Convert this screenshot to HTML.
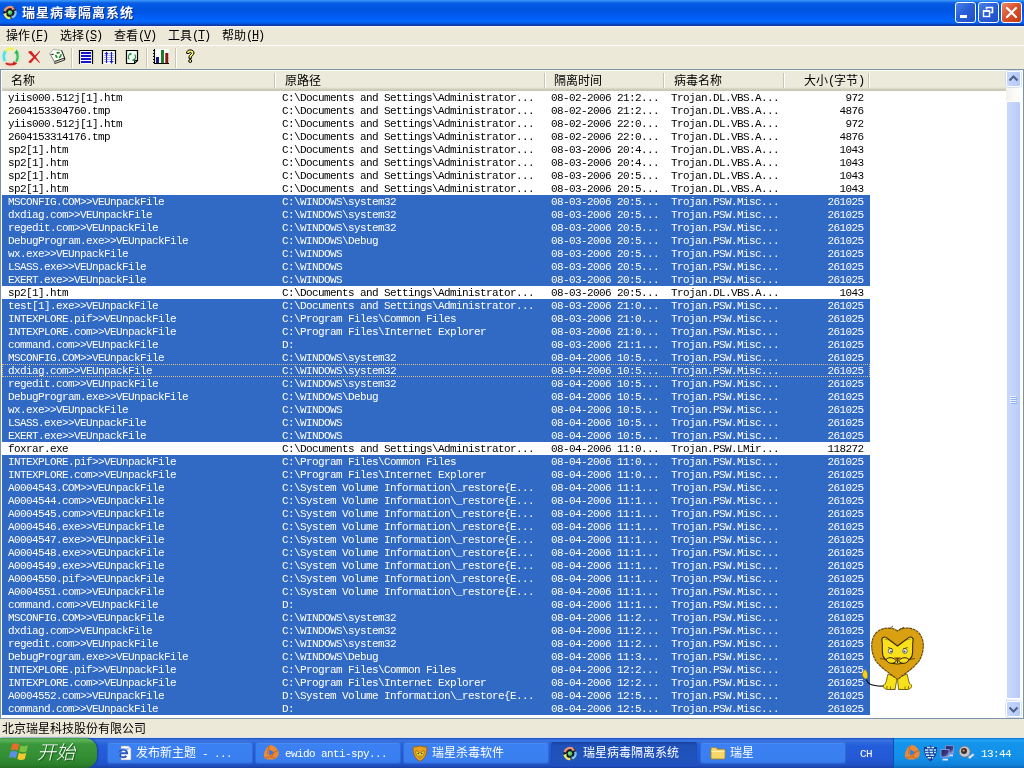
<!DOCTYPE html>
<html lang="zh-CN">
<head>
<meta charset="utf-8">
<title>瑞星病毒隔离系统</title>
<style>
*{box-sizing:border-box;margin:0;padding:0}
html,body{width:1024px;height:768px;overflow:hidden;background:#ece9d8}
body{position:relative;font-family:"Liberation Sans","Noto Sans CJK SC",sans-serif;font-size:12px;color:#000}
.abs{position:absolute}
#title .txt,#menu,#hdr,#rows,#status,#task{will-change:transform}
.m{font-family:"Liberation Mono","Noto Sans CJK SC",monospace;font-size:11px;letter-spacing:-.6px;white-space:pre}
.m2{font-family:"Liberation Mono","Noto Sans CJK SC",monospace;font-size:12px;letter-spacing:-1.2px;white-space:pre;position:relative;top:-1px}
/* title bar */
#title{left:0;top:0;width:1024px;height:26px;background:linear-gradient(to bottom,#3a96ff 0,#2f8cf8 1px,#1a70e8 2px,#0a5fe3 3px,#0058e2 5px,#0055e0 11px,#005af0 15px,#0064fa 19px,#0066fb 21px,#0060f0 23px,#0a4cc8 24px,#0a3aa8 25px,#0a3aa8 26px)}
#title .txt{left:22px;top:4px;height:18px;line-height:18px;color:#fff;font-weight:bold;font-size:13px;letter-spacing:1px;text-shadow:1px 1px 0 #0a2a80;white-space:nowrap}
.tb{top:2px;width:21px;height:21px;border:1px solid #fff;border-radius:3px;background:linear-gradient(135deg,#4b82e8 0,#2a5fd8 45%,#1f4fc8 100%)}
#bclose{background:linear-gradient(135deg,#e98a6a 0,#d9532c 45%,#c53a12 100%)}
/* menu */
#menuline{left:0;top:26px;width:1024px;height:1px;background:#f4f6fb}
#menu{left:0;top:27px;width:1024px;height:18px}
#menu span.mi{position:absolute;top:2px;height:14px;line-height:14px;white-space:nowrap}
#tline{left:0;top:45px;width:1024px;height:1px;background:#fff}
.sep{top:48px;width:2px;height:20px;border-left:1px solid #c9c6b8;border-right:1px solid #fff}
/* list */
#list{left:0;top:69px;width:1024px;height:650px;border:1px solid #7a93a6;background:#fff;overflow:hidden}
#hdr{left:0;top:0;width:1005px;height:21px;box-shadow:inset 1px 1px 0 #fff;background:linear-gradient(to bottom,#ebeadb 0,#ebeadb 17px,#e2dece 18px,#d6d2c2 19px,#cbc7b8 20px,#cbc7b8 21px)}
#hdr .h{position:absolute;top:4px;height:14px;line-height:14px;white-space:nowrap}
#hdr .d{position:absolute;top:3px;width:2px;height:15px;border-left:1px solid #c7c5b2;border-right:1px solid #fff}
#rows{left:1px;top:21px;width:868px}
.r{position:relative;height:13px;width:868px;line-height:13px}
.r.s{background:#316ac5;color:#fff}
.r.f{outline:1px dotted #d8c08a;outline-offset:-1px}
.r span{position:absolute;top:1px;height:13px;font-family:"Liberation Mono","Noto Sans CJK SC",monospace;font-size:11px;letter-spacing:-.6px;white-space:pre}
.c1{left:6px}.c2{left:280px}.c3{left:549px}.c4{left:669px}
.r span.c5{right:6.4px}
/* scrollbar */
#sb{left:1005px;top:0;width:17px;height:648px;background:linear-gradient(to right,#f3f1ec 0,#fbfbf8 50%,#fefefb 100%)}
.sbtn{left:0;width:15px;height:16px;border:1px solid #fff;border-radius:2px;background:linear-gradient(to right,#c8d8fb 0,#bccefa 60%,#b4c8f6 100%);box-shadow:0 0 0 .5px #b7c9f3}
#thumb{left:0;top:31px;width:15px;height:598px;border:1px solid #fff;border-radius:2px;background:linear-gradient(to right,#c9d8fc 0,#c2d3fc 50%,#b9cbf6 100%)}
/* status */
#status{left:2px;top:722px;height:14px;line-height:14px;white-space:nowrap}
/* taskbar */
#task{left:0;top:738px;width:1024px;height:30px;box-shadow:0 -1px 0 #dde4ee;background:linear-gradient(to bottom,#1f55c4 0,#2558cc 1px,#3a78e4 2px,#2e6ade 4px,#245ddb 8px,#2459d6 20px,#1f50c4 27px,#1941a5 30px)}
#start{left:0;top:0;width:97px;height:30px;border-radius:0 12px 12px 0;background:linear-gradient(to bottom,#3f9b3f 0,#5db25d 2px,#3a973a 6px,#348f34 18px,#2c822c 26px,#236f23 30px);box-shadow:1px 0 2px #153f8a}
#start .t{left:37px;top:3px;font-size:19px;line-height:24px;font-style:italic;font-weight:300;color:#fff;text-shadow:1px 1px 1px #1d4f1d;white-space:nowrap;letter-spacing:0}
.tk{top:4px;width:146px;height:22px;border-radius:3px;background:linear-gradient(to bottom,#5d96f0 0,#3c81f3 2px,#3a7ff0 18px,#3270de 23px);color:#fff;box-shadow:inset 0 0 0 1px rgba(30,70,170,.35)}
.tk.act{background:linear-gradient(to bottom,#183f98 0,#1e50b8 3px,#2053bc 20px,#2258c4 23px)}
.tk .l{position:absolute;left:29px;top:4px;height:14px;line-height:14px;white-space:nowrap}
.tk svg{position:absolute;left:10px;top:3px}
#tray{left:893px;top:0;width:131px;height:30px;background:linear-gradient(to bottom,#0f6fd0 0,#24a3f5 2px,#1594ec 5px,#1290e9 20px,#0f80d8 27px,#0c69bd 30px);border-left:1px solid #0c4fa8}
</style>
</head>
<body>
<!-- title bar -->
<div id="title" class="abs">
<svg class="abs" style="left:2px;top:4px" width="16" height="16" viewBox="0 0 16 16"><circle cx="8" cy="8.5" r="6.6" fill="#15181c"/><g fill="none" stroke-width="2.4"><path d="M2.6 7.2A5.4 5.4 0 0 1 11 3.9" stroke="#e8937c"/><path d="M13.2 6.6A5.4 5.4 0 0 1 10.6 13.4" stroke="#7fc4f4"/><path d="M8.4 14A5.4 5.4 0 0 1 2.6 9.6" stroke="#e9ea7a"/></g><path d="M10.2 2.4L13.4 5.2L9.8 6z" fill="#e8937c"/><path d="M12.6 12.4L9.6 15L9.4 11.6z" fill="#7fc4f4"/><path d="M1.2 10.4L4.6 8.4L4.4 11.8z" fill="#e9ea7a"/><circle cx="8" cy="8.6" r="2.3" fill="#4fc85f"/><circle cx="7.4" cy="8" r=".9" fill="#9fe8a8"/></svg>
<div class="abs txt">瑞星病毒隔离系统</div>
<div class="abs tb" style="left:955px"><div class="abs" style="left:4px;top:12px;width:7px;height:3px;background:#fff"></div></div>
<div class="abs tb" style="left:978px"><svg class="abs" style="left:0;top:0" width="19" height="19" viewBox="0 0 19 19"><path d="M7.5 6.5V4.5H13.5V9.5H11.5" fill="none" stroke="#fff" stroke-width="1.6"/><rect x="4.5" y="8" width="6" height="5.5" fill="none" stroke="#fff" stroke-width="1.4"/><rect x="4" y="7" width="7" height="2" fill="#fff"/></svg></div>
<div id="bclose" class="abs tb" style="left:1001px"><svg class="abs" style="left:0;top:0" width="19" height="19" viewBox="0 0 19 19"><path d="M5 5L14 14M14 5L5 14" stroke="#fff" stroke-width="2.2" stroke-linecap="round"/></svg></div>
</div>
<div id="menuline" class="abs"></div>
<!-- menu -->
<div id="menu" class="abs">
<span class="mi" style="left:6px">操作<span class="m2">(<u>F</u>)</span></span>
<span class="mi" style="left:60px">选择<span class="m2">(<u>S</u>)</span></span>
<span class="mi" style="left:114px">查看<span class="m2">(<u>V</u>)</span></span>
<span class="mi" style="left:168px">工具<span class="m2">(<u>T</u>)</span></span>
<span class="mi" style="left:222px">帮助<span class="m2">(<u>H</u>)</span></span>
</div>
<div id="tline" class="abs"></div>
<!-- toolbar -->
<svg class="abs" style="left:0;top:46px" width="210" height="23" viewBox="0 46 210 23">
<!-- refresh ring -->
<defs><filter id="gl" x="-30%" y="-30%" width="160%" height="160%"><feGaussianBlur stdDeviation="1"/></filter></defs>
<g fill="none" stroke-width="4" stroke-linecap="round" filter="url(#gl)" opacity=".55">
<path d="M4.4 60 C3.2 56.5 3.8 53 6 51" stroke="#9af4f8"/>
<path d="M6.4 50.6 C8.6 48.4 11.4 48.2 13 49" stroke="#fbf8a0"/>
<path d="M17 53 C18 55.5 18 58.5 16.6 61" stroke="#a8f0b0"/>
<path d="M6.5 63.6 C9 64.6 12 64.6 14.5 63.6" stroke="#f8b0a8"/>
</g>
<g fill="none" stroke-width="2.5" stroke-linecap="round">
<path d="M4.4 60 C3.2 56.5 3.8 53 6 51" stroke="#4fdfe8"/>
<path d="M6.4 50.6 C8.6 48.4 11.4 48.2 13 49" stroke="#f4f060"/>
<path d="M17 53.4 C18 55.8 18 58.5 16.6 61" stroke="#3cc060" stroke-width="2.2"/>
<path d="M6.5 63.6 C9 64.6 12 64.6 14.5 63.6" stroke="#cc2a22" stroke-width="2"/>
</g>
<path d="M14.2 53.4L16.6 49.4L19 53.6z" fill="#2fb850"/>
<path d="M13.2 61L17.2 63.4L13.6 65.6z" fill="#c4221c"/>
<!-- red X -->
<path d="M28.6 51.2L31.4 51L40 62.6L39.4 63L28.4 52.6z" fill="#d32222"/>
<path d="M39.8 50.8L40.2 51.4L31 63L28.8 62.8L29 61.2z" fill="#d32222"/>
<!-- disk w/ recycle -->
<path d="M49.8 53.6L53.2 49.4L61.6 50.4L64.6 58L54.4 61.6z" fill="#fdfdfa" stroke="#9a9a90" stroke-width=".8"/>
<path d="M54.4 61.6L64.6 58L64.6 60L54.8 63.6z" fill="#d4d4c4" stroke="#222" stroke-width=".9"/>
<path d="M61.6 50.4L64.6 58L64.6 60" fill="none" stroke="#222" stroke-width="1"/>
<path d="M49.8 53.6L54.4 61.6L54.8 63.6" fill="none" stroke="#888" stroke-width=".8"/>
<path d="M51.4 54.4H53.6" stroke="#222" stroke-width="1.2"/>
<circle cx="58.4" cy="55.2" r="2.5" fill="none" stroke="#1f8a2a" stroke-width="1.7" stroke-dasharray="3.2 1.6"/>
<!-- list icon -->
<rect x="80" y="51" width="12" height="13" fill="#fff"/><path d="M79.5 64V50.5H92.5V64" fill="none" stroke="#000" stroke-width="1.2"/>
<path d="M81 53H91M81 56H91M81 59H91M81 62H91" stroke="#1414c8" stroke-width="1.8"/>
<!-- columns icon -->
<rect x="103" y="51" width="12" height="13" fill="#fff"/>
<path d="M104 53.5H114M104 55.5H114M104 57.5H114M104 59.5H114M104 61.5H114" stroke="#aab4ee" stroke-width="1"/>
<path d="M102.5 64V50.5H115.5V64" fill="none" stroke="#000" stroke-width="1.2"/>
<path d="M106.5 52V63M111.5 52V63" stroke="#1a1ab4" stroke-width="1.2"/>
<path d="M104.8 54.2L106.5 51.6L108.2 54.2z M109.8 61L111.5 64L113.2 61z" fill="#1a1ab4"/>
<!-- page icon -->
<path d="M126.5 50.5H137.5V60.5L134.5 63.5H126.5z" fill="#f4fff4" stroke="#000" stroke-width="1.2"/>
<path d="M134.5 63.5V60.5H137.5" fill="none" stroke="#000" stroke-width="1"/>
<path d="M129.2 59.5C128 57.5 128.4 55 130.2 53.8M134.8 54.5C136 56.5 135.6 59 133.8 60.2" fill="none" stroke="#2f8a4a" stroke-width="1.3"/>
<path d="M129.2 53L132 53.2L130.6 55.4z M134.8 61L132 60.8L133.4 58.6z" fill="#2f8a4a"/>
<!-- chart -->
<rect x="155" y="49" width="14" height="14" fill="#fbfbfb"/>
<path d="M154.5 49V63.5H169" fill="none" stroke="#000" stroke-width="1.1"/>
<path d="M153 50.5H154.5M153 53.5H154.5M153 56.5H154.5M153 59.5H154.5M153 62.5H154.5" stroke="#000" stroke-width="1"/>
<rect x="156" y="57" width="3" height="6" fill="#1a1a7a"/>
<rect x="161" y="50" width="3" height="13" fill="#1f7a2a"/>
<rect x="165.3" y="53" width="3" height="10" fill="#8a1414"/>
<!-- question -->
<path d="M186.6 53.4C186.4 50.8 188.4 49.9 190.2 49.9C192.6 49.9 194 51.2 194 53C194 55 191.6 55.6 191.4 57.2V58.4H189V56.8C189.2 54.8 191.4 54.4 191.4 53.1C191.4 52.2 189.2 52 189.1 53.5z" fill="#f4f06a" stroke="#000" stroke-width="1"/>
<circle cx="190.2" cy="61" r="1.5" fill="#f4f06a" stroke="#000" stroke-width="1"/>
</svg>
<i class="abs sep" style="left:71px"></i><i class="abs sep" style="left:146px"></i><i class="abs sep" style="left:175px"></i>
<!-- list -->
<div id="list" class="abs">
<div id="hdr" class="abs">
<span class="h" style="left:10px">名称</span>
<span class="h" style="left:284px">原路径</span>
<span class="h" style="left:553px">隔离时间</span>
<span class="h" style="left:673px">病毒名称</span>
<span class="h" style="left:803px">大小<span class="m2">(</span>字节<span class="m2">)</span></span>
<i class="d" style="left:273px"></i><i class="d" style="left:543px"></i><i class="d" style="left:662px"></i><i class="d" style="left:782px"></i><i class="d" style="left:867px"></i>
</div>
<div id="rows" class="abs">
<div class="r"><span class="c1">yiis000.512j[1].htm</span><span class="c2">C:\Documents and Settings\Administrator...</span><span class="c3">08-02-2006 21:2...</span><span class="c4">Trojan.DL.VBS.A...</span><span class="c5">972</span></div>
<div class="r"><span class="c1">2604153304760.tmp</span><span class="c2">C:\Documents and Settings\Administrator...</span><span class="c3">08-02-2006 21:2...</span><span class="c4">Trojan.DL.VBS.A...</span><span class="c5">4876</span></div>
<div class="r"><span class="c1">yiis000.512j[1].htm</span><span class="c2">C:\Documents and Settings\Administrator...</span><span class="c3">08-02-2006 22:0...</span><span class="c4">Trojan.DL.VBS.A...</span><span class="c5">972</span></div>
<div class="r"><span class="c1">2604153314176.tmp</span><span class="c2">C:\Documents and Settings\Administrator...</span><span class="c3">08-02-2006 22:0...</span><span class="c4">Trojan.DL.VBS.A...</span><span class="c5">4876</span></div>
<div class="r"><span class="c1">sp2[1].htm</span><span class="c2">C:\Documents and Settings\Administrator...</span><span class="c3">08-03-2006 20:4...</span><span class="c4">Trojan.DL.VBS.A...</span><span class="c5">1043</span></div>
<div class="r"><span class="c1">sp2[1].htm</span><span class="c2">C:\Documents and Settings\Administrator...</span><span class="c3">08-03-2006 20:4...</span><span class="c4">Trojan.DL.VBS.A...</span><span class="c5">1043</span></div>
<div class="r"><span class="c1">sp2[1].htm</span><span class="c2">C:\Documents and Settings\Administrator...</span><span class="c3">08-03-2006 20:5...</span><span class="c4">Trojan.DL.VBS.A...</span><span class="c5">1043</span></div>
<div class="r"><span class="c1">sp2[1].htm</span><span class="c2">C:\Documents and Settings\Administrator...</span><span class="c3">08-03-2006 20:5...</span><span class="c4">Trojan.DL.VBS.A...</span><span class="c5">1043</span></div>
<div class="r s"><span class="c1">MSCONFIG.COM&gt;&gt;VEUnpackFile</span><span class="c2">C:\WINDOWS\system32</span><span class="c3">08-03-2006 20:5...</span><span class="c4">Trojan.PSW.Misc...</span><span class="c5">261025</span></div>
<div class="r s"><span class="c1">dxdiag.com&gt;&gt;VEUnpackFile</span><span class="c2">C:\WINDOWS\system32</span><span class="c3">08-03-2006 20:5...</span><span class="c4">Trojan.PSW.Misc...</span><span class="c5">261025</span></div>
<div class="r s"><span class="c1">regedit.com&gt;&gt;VEUnpackFile</span><span class="c2">C:\WINDOWS\system32</span><span class="c3">08-03-2006 20:5...</span><span class="c4">Trojan.PSW.Misc...</span><span class="c5">261025</span></div>
<div class="r s"><span class="c1">DebugProgram.exe&gt;&gt;VEUnpackFile</span><span class="c2">C:\WINDOWS\Debug</span><span class="c3">08-03-2006 20:5...</span><span class="c4">Trojan.PSW.Misc...</span><span class="c5">261025</span></div>
<div class="r s"><span class="c1">wx.exe&gt;&gt;VEUnpackFile</span><span class="c2">C:\WINDOWS</span><span class="c3">08-03-2006 20:5...</span><span class="c4">Trojan.PSW.Misc...</span><span class="c5">261025</span></div>
<div class="r s"><span class="c1">LSASS.exe&gt;&gt;VEUnpackFile</span><span class="c2">C:\WINDOWS</span><span class="c3">08-03-2006 20:5...</span><span class="c4">Trojan.PSW.Misc...</span><span class="c5">261025</span></div>
<div class="r s"><span class="c1">EXERT.exe&gt;&gt;VEUnpackFile</span><span class="c2">C:\WINDOWS</span><span class="c3">08-03-2006 20:5...</span><span class="c4">Trojan.PSW.Misc...</span><span class="c5">261025</span></div>
<div class="r"><span class="c1">sp2[1].htm</span><span class="c2">C:\Documents and Settings\Administrator...</span><span class="c3">08-03-2006 20:5...</span><span class="c4">Trojan.DL.VBS.A...</span><span class="c5">1043</span></div>
<div class="r s"><span class="c1">test[1].exe&gt;&gt;VEUnpackFile</span><span class="c2">C:\Documents and Settings\Administrator...</span><span class="c3">08-03-2006 21:0...</span><span class="c4">Trojan.PSW.Misc...</span><span class="c5">261025</span></div>
<div class="r s"><span class="c1">INTEXPLORE.pif&gt;&gt;VEUnpackFile</span><span class="c2">C:\Program Files\Common Files</span><span class="c3">08-03-2006 21:0...</span><span class="c4">Trojan.PSW.Misc...</span><span class="c5">261025</span></div>
<div class="r s"><span class="c1">INTEXPLORE.com&gt;&gt;VEUnpackFile</span><span class="c2">C:\Program Files\Internet Explorer</span><span class="c3">08-03-2006 21:0...</span><span class="c4">Trojan.PSW.Misc...</span><span class="c5">261025</span></div>
<div class="r s"><span class="c1">command.com&gt;&gt;VEUnpackFile</span><span class="c2">D:</span><span class="c3">08-03-2006 21:1...</span><span class="c4">Trojan.PSW.Misc...</span><span class="c5">261025</span></div>
<div class="r s"><span class="c1">MSCONFIG.COM&gt;&gt;VEUnpackFile</span><span class="c2">C:\WINDOWS\system32</span><span class="c3">08-04-2006 10:5...</span><span class="c4">Trojan.PSW.Misc...</span><span class="c5">261025</span></div>
<div class="r s f"><span class="c1">dxdiag.com&gt;&gt;VEUnpackFile</span><span class="c2">C:\WINDOWS\system32</span><span class="c3">08-04-2006 10:5...</span><span class="c4">Trojan.PSW.Misc...</span><span class="c5">261025</span></div>
<div class="r s"><span class="c1">regedit.com&gt;&gt;VEUnpackFile</span><span class="c2">C:\WINDOWS\system32</span><span class="c3">08-04-2006 10:5...</span><span class="c4">Trojan.PSW.Misc...</span><span class="c5">261025</span></div>
<div class="r s"><span class="c1">DebugProgram.exe&gt;&gt;VEUnpackFile</span><span class="c2">C:\WINDOWS\Debug</span><span class="c3">08-04-2006 10:5...</span><span class="c4">Trojan.PSW.Misc...</span><span class="c5">261025</span></div>
<div class="r s"><span class="c1">wx.exe&gt;&gt;VEUnpackFile</span><span class="c2">C:\WINDOWS</span><span class="c3">08-04-2006 10:5...</span><span class="c4">Trojan.PSW.Misc...</span><span class="c5">261025</span></div>
<div class="r s"><span class="c1">LSASS.exe&gt;&gt;VEUnpackFile</span><span class="c2">C:\WINDOWS</span><span class="c3">08-04-2006 10:5...</span><span class="c4">Trojan.PSW.Misc...</span><span class="c5">261025</span></div>
<div class="r s"><span class="c1">EXERT.exe&gt;&gt;VEUnpackFile</span><span class="c2">C:\WINDOWS</span><span class="c3">08-04-2006 10:5...</span><span class="c4">Trojan.PSW.Misc...</span><span class="c5">261025</span></div>
<div class="r"><span class="c1">foxrar.exe</span><span class="c2">C:\Documents and Settings\Administrator...</span><span class="c3">08-04-2006 11:0...</span><span class="c4">Trojan.PSW.LMir...</span><span class="c5">118272</span></div>
<div class="r s"><span class="c1">INTEXPLORE.pif&gt;&gt;VEUnpackFile</span><span class="c2">C:\Program Files\Common Files</span><span class="c3">08-04-2006 11:0...</span><span class="c4">Trojan.PSW.Misc...</span><span class="c5">261025</span></div>
<div class="r s"><span class="c1">INTEXPLORE.com&gt;&gt;VEUnpackFile</span><span class="c2">C:\Program Files\Internet Explorer</span><span class="c3">08-04-2006 11:0...</span><span class="c4">Trojan.PSW.Misc...</span><span class="c5">261025</span></div>
<div class="r s"><span class="c1">A0004543.COM&gt;&gt;VEUnpackFile</span><span class="c2">C:\System Volume Information\_restore{E...</span><span class="c3">08-04-2006 11:1...</span><span class="c4">Trojan.PSW.Misc...</span><span class="c5">261025</span></div>
<div class="r s"><span class="c1">A0004544.com&gt;&gt;VEUnpackFile</span><span class="c2">C:\System Volume Information\_restore{E...</span><span class="c3">08-04-2006 11:1...</span><span class="c4">Trojan.PSW.Misc...</span><span class="c5">261025</span></div>
<div class="r s"><span class="c1">A0004545.com&gt;&gt;VEUnpackFile</span><span class="c2">C:\System Volume Information\_restore{E...</span><span class="c3">08-04-2006 11:1...</span><span class="c4">Trojan.PSW.Misc...</span><span class="c5">261025</span></div>
<div class="r s"><span class="c1">A0004546.exe&gt;&gt;VEUnpackFile</span><span class="c2">C:\System Volume Information\_restore{E...</span><span class="c3">08-04-2006 11:1...</span><span class="c4">Trojan.PSW.Misc...</span><span class="c5">261025</span></div>
<div class="r s"><span class="c1">A0004547.exe&gt;&gt;VEUnpackFile</span><span class="c2">C:\System Volume Information\_restore{E...</span><span class="c3">08-04-2006 11:1...</span><span class="c4">Trojan.PSW.Misc...</span><span class="c5">261025</span></div>
<div class="r s"><span class="c1">A0004548.exe&gt;&gt;VEUnpackFile</span><span class="c2">C:\System Volume Information\_restore{E...</span><span class="c3">08-04-2006 11:1...</span><span class="c4">Trojan.PSW.Misc...</span><span class="c5">261025</span></div>
<div class="r s"><span class="c1">A0004549.exe&gt;&gt;VEUnpackFile</span><span class="c2">C:\System Volume Information\_restore{E...</span><span class="c3">08-04-2006 11:1...</span><span class="c4">Trojan.PSW.Misc...</span><span class="c5">261025</span></div>
<div class="r s"><span class="c1">A0004550.pif&gt;&gt;VEUnpackFile</span><span class="c2">C:\System Volume Information\_restore{E...</span><span class="c3">08-04-2006 11:1...</span><span class="c4">Trojan.PSW.Misc...</span><span class="c5">261025</span></div>
<div class="r s"><span class="c1">A0004551.com&gt;&gt;VEUnpackFile</span><span class="c2">C:\System Volume Information\_restore{E...</span><span class="c3">08-04-2006 11:1...</span><span class="c4">Trojan.PSW.Misc...</span><span class="c5">261025</span></div>
<div class="r s"><span class="c1">command.com&gt;&gt;VEUnpackFile</span><span class="c2">D:</span><span class="c3">08-04-2006 11:1...</span><span class="c4">Trojan.PSW.Misc...</span><span class="c5">261025</span></div>
<div class="r s"><span class="c1">MSCONFIG.COM&gt;&gt;VEUnpackFile</span><span class="c2">C:\WINDOWS\system32</span><span class="c3">08-04-2006 11:2...</span><span class="c4">Trojan.PSW.Misc...</span><span class="c5">261025</span></div>
<div class="r s"><span class="c1">dxdiag.com&gt;&gt;VEUnpackFile</span><span class="c2">C:\WINDOWS\system32</span><span class="c3">08-04-2006 11:2...</span><span class="c4">Trojan.PSW.Misc...</span><span class="c5">261025</span></div>
<div class="r s"><span class="c1">regedit.com&gt;&gt;VEUnpackFile</span><span class="c2">C:\WINDOWS\system32</span><span class="c3">08-04-2006 11:2...</span><span class="c4">Trojan.PSW.Misc...</span><span class="c5">261025</span></div>
<div class="r s"><span class="c1">DebugProgram.exe&gt;&gt;VEUnpackFile</span><span class="c2">C:\WINDOWS\Debug</span><span class="c3">08-04-2006 11:3...</span><span class="c4">Trojan.PSW.Misc...</span><span class="c5">261025</span></div>
<div class="r s"><span class="c1">INTEXPLORE.pif&gt;&gt;VEUnpackFile</span><span class="c2">C:\Program Files\Common Files</span><span class="c3">08-04-2006 12:2...</span><span class="c4">Trojan.PSW.Misc...</span><span class="c5">261025</span></div>
<div class="r s"><span class="c1">INTEXPLORE.com&gt;&gt;VEUnpackFile</span><span class="c2">C:\Program Files\Internet Explorer</span><span class="c3">08-04-2006 12:2...</span><span class="c4">Trojan.PSW.Misc...</span><span class="c5">261025</span></div>
<div class="r s"><span class="c1">A0004552.com&gt;&gt;VEUnpackFile</span><span class="c2">D:\System Volume Information\_restore{E...</span><span class="c3">08-04-2006 12:5...</span><span class="c4">Trojan.PSW.Misc...</span><span class="c5">261025</span></div>
<div class="r s"><span class="c1">command.com&gt;&gt;VEUnpackFile</span><span class="c2">D:</span><span class="c3">08-04-2006 12:5...</span><span class="c4">Trojan.PSW.Misc...</span><span class="c5">261025</span></div>
</div>
<svg class="abs" style="left:859px;top:555px" width="68" height="70" viewBox="860 625 68 70">
<!-- tail -->
<path d="M866.5 679C867 684 872 686.5 884 686" fill="none" stroke="#111" stroke-width="1.2"/>
<path d="M865 669.5C867.5 671.5 868.5 675.5 866.8 679C863.6 678.8 862 676 862.6 673.5C863 671.8 864 670.5 865 669.5z" fill="#f3d21a" stroke="#9a7a10" stroke-width=".6"/>
<!-- legs / feet -->
<path d="M888 674L886 682L884.5 685.5C884 688 886 689 889 689L895 689.4L896 684L897.5 678z" fill="#f7e11a" stroke="#5a4a08" stroke-width=".8"/>
<path d="M907 674L909 682L910.5 685.5C911 688 909 689 906 689L898.5 689.4L898 684L897.5 678z" fill="#f7e11a" stroke="#5a4a08" stroke-width=".8"/>
<path d="M884.5 684C882 686 884 689.5 888 689.5L895.5 689.5M910.5 684C913 686 911 689.5 907 689.5L898.5 689.5" fill="#f7e11a" stroke="#5a4a08" stroke-width=".8"/>
<!-- mane (heart-ish) -->
<path d="M897.5 631C893 627 882 626.5 876 633C870 640 870.5 652 876 661C882 669 891 674 897.5 679.5C904 674 913 669 919 661C924.5 652 925 640 919 633C913 626.5 902 627 897.5 631z" fill="#d9a012" stroke="#6a4a0a" stroke-width="1.2" stroke-dasharray="3 .6"/>
<path d="M889 629L893 626M899 630L904 627" stroke="#6a4808" stroke-width=".9"/>
<!-- face -->
<path d="M882 641C881 637.5 885 635.5 887.5 638.5L897.5 646L907.5 638.5C910 635.5 914 637.5 913 641C912 646 913.5 651 912 656C910 661 903 664 897.5 664C892 664 885 661 883 656C881.5 651 883 646 882 641z" fill="#f8e11c" stroke="#3a2a04" stroke-width="1.1"/>
<path d="M884.6 639.6C885.6 638.6 887 639 887.4 640.2M910.4 639.6C909.4 638.6 908 639 907.6 640.2" fill="none" stroke="#8a6a0a" stroke-width=".8"/>
<path d="M888 647.5L892.5 649M907.5 647.5L903 649" stroke="#3a2a04" stroke-width=".8"/>
<circle cx="890.5" cy="651" r="2.3" fill="#fff" stroke="#333" stroke-width=".7"/><circle cx="905" cy="651" r="2.3" fill="#fff" stroke="#333" stroke-width=".7"/>
<circle cx="891" cy="651.5" r="1.1" fill="#557"/><circle cx="904.5" cy="651.5" r="1.1" fill="#557"/>
<path d="M894 657.5H901L897.5 660.5z" fill="#7a3a10"/>
<path d="M897.5 660.5V663M886 659.5C889 656.5 894 657.5 896.5 661C893 664.5 888 664 886 659.5zM909 659.5C906 656.5 901 657.5 898.5 661C902 664.5 907 664 909 659.5z" fill="#f8e11c" stroke="#2a1c02" stroke-width="1"/>
<path d="M909 659.5L915 658.5M886 659.5L880 658.5" stroke="#3a2a04" stroke-width=".7"/>
<path d="M887 686V689M890.5 686.5V689.4M905 686.5V689.4M908.5 686V689" stroke="#5a4a08" stroke-width=".7"/>
</svg>
<div id="sb" class="abs">
<div class="abs sbtn" style="top:1px"><svg class="abs" style="left:0;top:0" width="13" height="14" viewBox="0 0 13 14"><path d="M2.5 8.5L6.5 4.5L10.5 8.5" fill="none" stroke="#4d6185" stroke-width="2"/></svg></div>
<div id="thumb" class="abs"><svg class="abs" style="left:3px;top:294px" width="8" height="9" viewBox="0 0 8 9" shape-rendering="crispEdges"><path d="M0 .5H6M0 2.5H6M0 4.5H6M0 6.5H6" stroke="#eef4fe" stroke-width="1"/><path d="M1 1.5H7M1 3.5H7M1 5.5H7M1 7.5H7" stroke="#8cb0f8" stroke-width="1"/></svg></div>
<div class="abs sbtn" style="top:631px"><svg class="abs" style="left:0;top:0" width="13" height="14" viewBox="0 0 13 14"><path d="M2.5 5.5L6.5 9.5L10.5 5.5" fill="none" stroke="#4d6185" stroke-width="2"/></svg></div>
</div>
</div>
<!-- status bar -->
<div id="status" class="abs">北京瑞星科技股份有限公司</div>
<!-- taskbar -->
<div id="task" class="abs">
<div id="start" class="abs"><svg class="abs" style="left:9px;top:4px" width="22" height="20" viewBox="0 0 22 20"><defs><filter id="bl" x="-20%" y="-20%" width="140%" height="140%"><feGaussianBlur stdDeviation=".5"/></filter></defs><g filter="url(#bl)"><path d="M3.2 2.2C5.5 .8 8 1.2 10.2 2.6L8.8 8.6C6.6 7.4 4.2 7.2 1.8 8.4z" fill="#ea6a2a"/><path d="M11.6 3.2C14 4.6 16.6 4.4 19 3L17.6 9.2C15.2 10.6 12.6 10.6 10.2 9.2z" fill="#7ac043"/><path d="M1.4 9.8C3.8 8.6 6.2 8.8 8.4 10L7 16.2C4.8 15 2.4 14.8 0 16z" fill="#5a8fe4"/><path d="M9.8 10.8C12.2 12.2 14.8 12.2 17.2 10.8L15.8 17C13.4 18.4 10.8 18.4 8.4 17z" fill="#f6c92c"/></g></svg><div class="abs t">开始</div></div>
<div class="abs tk" style="left:107px"><svg width="16" height="16" viewBox="0 0 16 16"><path d="M4 1H11.5L14 3.5V15H4z" fill="#fff" stroke="#8a94a8" stroke-width=".6"/><path d="M11.5 1V3.5H14z" fill="#ccd"/><path d="M9.4 10.8A3.9 3.9 0 1 1 10.2 8.2H3.2" fill="none" stroke="#2a56c4" stroke-width="1.9"/><path d="M.8 11.2C2.4 6 7.6 3.4 11.6 4.2" fill="none" stroke="#4a84e8" stroke-width="1.1"/></svg><span class="l">发布新主题<span class="m"> - ...</span></span></div>
<div class="abs tk" style="left:255px"><svg style="left:8px;top:2px" width="17" height="17" viewBox="0 0 17 17"><path d="M7 1.2C9.4 .4 13 2.6 15 6.6C16.6 10 15.6 13 12.6 14.4C9 16 4 16 2 14.2C.2 12.4 1 8.4 2.6 5.4C3.8 3.2 5.2 1.8 7 1.2z" fill="#e88a3c"/><path d="M6.2 5.4L11.6 8.6L6.2 11.8z" fill="#3a74e0"/><path d="M7 1.2C5 4 4.4 7 5 10M15 6.6C12 7 9.6 9.4 8.6 13M2 14.2C5 12.6 9 12.8 12.6 14.4" fill="none" stroke="#c86a1c" stroke-width="1.1"/></svg><span class="l" style="left:30px"><span class="m">ewido anti-spy...</span></span></div>
<div class="abs tk" style="left:403px"><svg style="left:9px" width="16" height="17" viewBox="0 0 16 17"><path d="M1.2 1.6C3.4 2.4 5.6 1.6 8 .8C10.4 1.6 12.6 2.4 14.8 1.6C15.4 8 13.6 13.4 8 16.4C2.4 13.4 .6 8 1.2 1.6z" fill="#e8a020" stroke="#8a5a08" stroke-width=".8"/><path d="M4 5.4L8 8L12 5.4C12.6 8.6 11.4 11.6 8 13C4.6 11.6 3.4 8.6 4 5.4z" fill="#f6dc3a" stroke="#7a5208" stroke-width=".6"/><circle cx="6.2" cy="8.6" r=".8" fill="#333"/><circle cx="9.8" cy="8.6" r=".8" fill="#333"/><path d="M6.6 11H9.4" stroke="#6a3a08" stroke-width=".8"/></svg><span class="l">瑞星杀毒软件</span></div>
<div class="abs tk act" style="left:551px"><svg style="left:11px" width="16" height="16" viewBox="0 0 16 16"><circle cx="8" cy="8.5" r="6.6" fill="#15181c"/><g fill="none" stroke-width="2.4"><path d="M2.6 7.2A5.4 5.4 0 0 1 11 3.9" stroke="#e8937c"/><path d="M13.2 6.6A5.4 5.4 0 0 1 10.6 13.4" stroke="#7fc4f4"/><path d="M8.4 14A5.4 5.4 0 0 1 2.6 9.6" stroke="#e9ea7a"/></g><path d="M10.2 2.4L13.4 5.2L9.8 6z" fill="#e8937c"/><path d="M12.6 12.4L9.6 15L9.4 11.6z" fill="#7fc4f4"/><path d="M1.2 10.4L4.6 8.4L4.4 11.8z" fill="#e9ea7a"/><circle cx="8" cy="8.6" r="2.3" fill="#4fc85f"/><circle cx="7.4" cy="8" r=".9" fill="#9fe8a8"/></svg><span class="l" style="left:32px">瑞星病毒隔离系统</span></div>
<div class="abs tk" style="left:700px"><svg width="16" height="16" viewBox="0 0 16 16"><path d="M1 4.2C1 3.2 1.6 2.6 2.6 2.6H6L7.4 4.2H13.6C14.6 4.2 15 4.8 15 5.6V12.6C15 13.4 14.4 14 13.6 14H2.4C1.6 14 1 13.4 1 12.6z" fill="#f6d868" stroke="#a8821c" stroke-width=".8"/><path d="M1.4 6.4H14.6" stroke="#fff2b0" stroke-width="1"/></svg><span class="l" style="left:30px">瑞星</span></div>
<div class="abs" style="left:860px;top:8px;color:#fff;height:14px;line-height:14px"><span class="m">CH</span></div>
<div id="tray" class="abs">
<svg class="abs" style="left:10px;top:6px" width="17" height="17" viewBox="0 0 17 17"><path d="M7 1.2C9.4 .4 13 2.6 15 6.6C16.6 10 15.6 13 12.6 14.4C9 16 4 16 2 14.2C.2 12.4 1 8.4 2.6 5.4C3.8 3.2 5.2 1.8 7 1.2z" fill="#e88a3c"/><path d="M6.2 5.4L11.6 8.6L6.2 11.8z" fill="#2a80e4"/><path d="M7 1.2C5 4 4.4 7 5 10M15 6.6C12 7 9.6 9.4 8.6 13M2 14.2C5 12.6 9 12.8 12.6 14.4" fill="none" stroke="#c86a1c" stroke-width="1.1"/></svg>
<svg class="abs" style="left:29px;top:7px" width="15" height="17" viewBox="0 0 15 17"><path d="M1 2C3.2 2.4 5.2 1.6 7.5 .6C9.8 1.6 11.8 2.4 14 2C14.4 8 12.6 13 7.5 16.4C2.4 13 .6 8 1 2z" fill="#1a3aa0"/><path d="M4 2.5H11M2 5H13M2.2 7.6H12.8M3 10.2H12M4.6 12.8H10.4" stroke="#bff4f4" stroke-width="1.5" stroke-dasharray="3.4 1"/></svg>
<svg class="abs" style="left:46px;top:7px" width="15" height="17" viewBox="0 0 15 17"><defs><linearGradient id="mg" x1="0" y1="0" x2="1" y2="1"><stop offset="0" stop-color="#20205a"/><stop offset=".6" stop-color="#3a3a88"/><stop offset="1" stop-color="#c8b8e0"/></linearGradient></defs><rect x="5.5" y=".8" width="8" height="7.4" fill="url(#mg)" stroke="#8a9ad8" stroke-width=".8"/><rect x="1" y="4.6" width="8" height="7.4" fill="url(#mg)" stroke="#9aaae0" stroke-width=".8"/><path d="M2.5 14.6H8M9.6 10.4H13" stroke="#e8e0f4" stroke-width="1.8"/></svg>
<svg class="abs" style="left:64px;top:7px" width="18" height="17" viewBox="0 0 18 17"><circle cx="6.6" cy="6.6" r="5.6" fill="#c4c6cc" stroke="#6a6e78" stroke-width=".8"/><circle cx="6" cy="6" r="3" fill="#3a2c2c"/><circle cx="5.6" cy="5.6" r="1.2" fill="#d08050"/><path d="M10 12L15 8.4L16.4 10L11.6 14z" fill="#dfe8f8" stroke="#8aa0d0" stroke-width=".6"/></svg>
<div class="abs" style="left:87px;top:8px;color:#fff;height:14px;line-height:14px"><span class="m">13:44</span></div>
</div>
</div>
</body>
</html>
